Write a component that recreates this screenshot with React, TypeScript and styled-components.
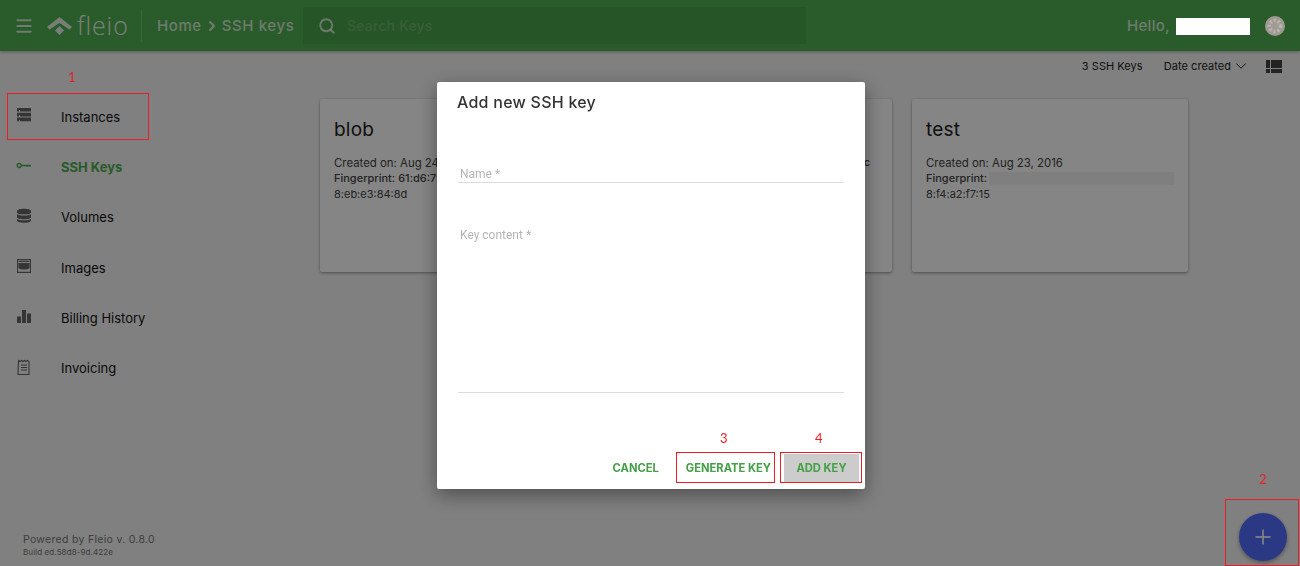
import { Menu, Search, ChevronRight, ChevronDown, Plus } from 'lucide-react'
import styled, { createGlobalStyle } from 'styled-components'

const GlobalStyle = createGlobalStyle`
  html, body {
    margin: 0;
    padding: 0;
    height: 100%;
    overflow: hidden;
    background: #f5f5f5;
    font-family: Inter, 'Liberation Sans', sans-serif;
  }
  * { box-sizing: border-box; }
`

const Page = styled.div`
  width: 1300px;
  height: 566px;
  display: flex;
  flex-direction: column;
  overflow: hidden;
`

const Header = styled.header`
  height: 51px;
  flex-shrink: 0;
  background: #51b153;
  box-shadow: 0 1px 3px rgba(0, 0, 0, 0.3);
  display: flex;
  align-items: center;
  padding-left: 14px;
  color: rgba(255, 255, 255, 0.75);
`

const LogoMark = styled.svg`
  width: 25px;
  height: 18px;
  margin-left: 13px;
  fill: rgba(255, 255, 255, 0.85);
`

const LogoText = styled.span`
  font-family: 'Open Sans', sans-serif;
  font-weight: 300;
  font-size: 25px;
  width: 59px;
  margin-left: 5px;
  margin-top: -2px;
  letter-spacing: 0.9px;
  color: rgba(255, 255, 255, 0.9);
`

const Divider = styled.div`
  width: 1px;
  height: 32px;
  background: rgba(255, 255, 255, 0.2);
  margin: 0 15px 0 5px;
`

const Crumbs = styled.div`
  display: flex;
  align-items: center;
  gap: 2px;
  font-size: 15px;
  font-weight: 500;
  letter-spacing: 0.6px;
  width: 146px;
  white-space: nowrap;
`

const SearchBox = styled.div`
  width: 503px;
  height: 37px;
  background: rgba(0, 0, 0, 0.08);
  display: flex;
  align-items: center;
  gap: 11px;
  padding-left: 15px;
`

const SearchHint = styled.span`
  font-size: 14px;
  font-weight: 500;
  letter-spacing: 0.2px;
  color: rgba(255, 255, 255, 0.2);
`

const Hello = styled.div`
  margin-left: auto;
  width: 146px;
  font-size: 15px;
  font-weight: 500;
  letter-spacing: 0.3px;
`

const Avatar = styled.svg`
  position: relative;
  z-index: 1;
  width: 20px;
  height: 20px;
  margin-right: 15px;
  margin-left: -8px;
`

const Body = styled.div`
  flex: 1;
  display: grid;
  grid-template-columns: 300px 1fr;
  min-height: 0;
`

const Sidebar = styled.aside`
  display: flex;
  flex-direction: column;
  padding-top: 40.6px;
`

const NavItem = styled.div<{ $active?: boolean }>`
  height: 50.3px;
  display: flex;
  align-items: center;
  padding-left: 16px;
  gap: 29px;
  font-size: 13px;
  font-weight: ${p => (p.$active ? 700 : 400)};
  color: ${p => (p.$active ? '#4caf50' : '#111')};

  svg {
    width: 16px;
    height: 16px;
    margin-bottom: 3px;
    flex-shrink: 0;
    color: ${p => (p.$active ? '#4caf50' : '#666')};
  }
`

const Footer = styled.footer`
  margin-top: auto;
  padding: 0 0 8px 23px;
  color: #777;
`

const Powered = styled.div`
  font-size: 10.5px;
  line-height: 14px;
  letter-spacing: 0.3px;
`

const Build = styled.div`
  font-size: 8px;
  line-height: 11px;
  letter-spacing: 0.1px;
`

const Main = styled.main`
  padding: 0 18px 0 20px;
`

const Toolbar = styled.div`
  height: 28px;
  display: flex;
  justify-content: flex-end;
  align-items: center;
  font-size: 11px;
  letter-spacing: 0.05px;
  color: #222;
  margin-top: 1px;
`

const Sort = styled.div`
  display: flex;
  align-items: center;
  gap: 1px;
  margin-left: 21px;
  margin-right: 16px;
`

const Cards = styled.div`
  display: flex;
  gap: 20px;
  margin-top: 19px;
`

const Card = styled.article`
  width: 276px;
  height: 173px;
  background: #fff;
  border-radius: 2px;
  box-shadow: 0 1px 3px rgba(0, 0, 0, 0.4);
  padding: 19px 14px;
  color: #444;
`

const CardTitle = styled.h3`
  margin: 0 0 13px;
  min-height: 24px;
  font-size: 19px;
  line-height: 23px;
  letter-spacing: 0.2px;
  font-weight: 400;
  color: #222;
`

const CardLine = styled.div`
  font-size: 11.4px;
  line-height: 16px;
  white-space: nowrap;
`

const CardKey = styled.div`
  font-size: 11px;
  line-height: 16px;
  white-space: nowrap;
`

const Fingerprint = styled.div<{ $end?: boolean }>`
  font-size: 11px;
  line-height: 15px;
  font-weight: 500;
  white-space: nowrap;
  display: flex;
  align-items: center;
  justify-content: ${p => (p.$end ? 'flex-end' : 'flex-start')};
  padding-right: ${p => (p.$end ? '8px' : '0')};
`

const Redacted = styled.span`
  display: block;
  width: 185px;
  height: 13px;
  margin-left: 2px;
  background: #f3f3f3;
`

const Overlay = styled.div`
  position: fixed;
  inset: 0;
  background: rgba(0, 0, 0, 0.48);
`

const Modal = styled.section`
  position: fixed;
  left: 437px;
  top: 82px;
  width: 428px;
  height: 407px;
  background: #fff;
  border-radius: 2px;
  box-shadow: 0 6px 20px rgba(0, 0, 0, 0.4);
  display: flex;
  flex-direction: column;
  padding: 10px 21px 7px;
`

const ModalTitle = styled.h2`
  margin: 0 0 53px -1px;
  font-size: 16px;
  line-height: 21px;
  font-weight: 500;
  letter-spacing: 0.25px;
  color: #333;
`

const Field = styled.div<{ $height: number; $pad?: number }>`
  height: ${p => p.$height}px;
  padding: ${p => p.$pad ?? 0}px 0 0 2px;
  border-bottom: 1px solid #ddd;
  font: 12px/16px Roboto, 'Liberation Sans', sans-serif;
  color: #b5b5b5;
`

const Actions = styled.div`
  margin-top: auto;
  display: flex;
  align-items: center;
  justify-content: flex-end;
  margin-right: -15px;
`

const ActionButton = styled.button<{ $filled?: boolean }>`
  border: 0;
  height: 28px;
  padding: 0;
  font: 700 11.2px Inter, 'Liberation Sans', sans-serif;
  color: #43a047;
  background: ${p => (p.$filled ? '#ccc' : 'transparent')};
  width: ${p => (p.$filled ? '75px' : 'auto')};
  margin-left: ${p => (p.$filled ? '13px' : '27px')};
`

const Fab = styled.button`
  position: fixed;
  left: 1239px;
  top: 513px;
  width: 48px;
  height: 48px;
  border: 0;
  border-radius: 50%;
  background: #2b3984;
  color: #8a8a8a;
  box-shadow: 0 2px 4px rgba(0, 0, 0, 0.35);
  display: flex;
  align-items: center;
  justify-content: center;
`

/* annotations drawn on top of the screenshot */
const Mark = styled.div<{ $x: number; $y: number; $w: number; $h: number }>`
  position: fixed;
  left: ${p => p.$x}px;
  top: ${p => p.$y}px;
  width: ${p => p.$w}px;
  height: ${p => p.$h}px;
  border: 1px solid #ed1c24;
`

const MarkLabel = styled.span<{ $x: number; $y: number }>`
  position: fixed;
  left: ${p => p.$x}px;
  top: ${p => p.$y}px;
  font: 13px Lato, 'Liberation Sans', sans-serif;
  color: #ed1c24;
`

const WhiteOut = styled.div`
  position: fixed;
  left: 1176px;
  top: 18px;
  width: 74px;
  height: 17px;
  background: #fff;
`

function ServerIcon() {
  return (
    <svg viewBox="0 0 16 16" fill="currentColor">
      <path d="M1 1h14v3.6H4V3H3v1.6H1zM1 5.800h14v3.6H4V8H3v1.4H1zM1 10.600h14v3.6H4V13H3v1.2H1z" />
    </svg>
  )
}

function KeyIcon() {
  return (
    <svg viewBox="0 0 16 16" fill="none" stroke="currentColor">
      <circle cx="3.2" cy="7.5" r="2" strokeWidth="1.4" />
      <path d="M5.2 7.500H15M11 7.500v1.6M13.600 7.500v1.2" strokeWidth="1.4" />
    </svg>
  )
}

function VolumesIcon() {
  return (
    <svg viewBox="0 0 16 16" fill="currentColor">
      <path d="M1 3c0-3 14-3 14 0v1.400c0 2.600-14 2.600-14 0z" />
      <path d="M1 6.200c2.500 1.800 11.500 1.800 14 0v3c0 2.600-14 2.600-14 0z" />
      <path d="M1 11c2.500 1.800 11.500 1.800 14 0v1.600c0 3-14 3-14 0z" />
    </svg>
  )
}

function ImagesIcon() {
  return (
    <svg viewBox="0 0 16 16" fill="currentColor">
      <path d="M1 1h14v14H1zM2 2.200v11.600h12V2.200z" />
      <path d="M2.500 3h11v1h-11zM2.500 5h11v5c-2 2-9 2-11 0z" />
    </svg>
  )
}

function BarsIcon() {
  return (
    <svg viewBox="0 0 16 16" fill="currentColor">
      <path d="M1 8.500h4V15H1zM6 2h4v13H6zM11 5.500h4V15h-4z" />
    </svg>
  )
}

function InvoiceIcon() {
  return (
    <svg viewBox="0 0 16 16" fill="none" stroke="currentColor" strokeWidth="1.1">
      <path d="M2.500 1.500l1.500 1 1.500-1 1.500 1 1.500-1 1.500 1 1.500-1 1.500 1v13h-11z" />
      <path d="M5 6h6M5 8.500h6M5 11h6" />
    </svg>
  )
}

function ListIcon() {
  return (
    <svg width="16" height="13" viewBox="0 0 16 13" fill="#444">
      <path d="M0 0h4v8H0zM5 0h11v8H5zM0 9h4v4H0zM5 9h11v4H5z" />
    </svg>
  )
}

const navItems = [
  { label: 'Instances', icon: <ServerIcon /> },
  { label: 'SSH Keys', icon: <KeyIcon />, active: true },
  { label: 'Volumes', icon: <VolumesIcon /> },
  { label: 'Images', icon: <ImagesIcon /> },
  { label: 'Billing History', icon: <BarsIcon /> },
  { label: 'Invoicing', icon: <InvoiceIcon /> },
]

export default function App() {
  return (
    <>
      <GlobalStyle />
      <Page>
        <Header>
          <Menu size={20} strokeWidth={2.4} />
          <LogoMark viewBox="0 0 25 18">
            <path d="M0 10L12.500 0 25 10l-2.500 2.500-10-6.500-10 6.500z" />
            <path d="M12.500 9l4.500 4.500L12.500 18 8 13.500z" />
          </LogoMark>
          <LogoText>fleio</LogoText>
          <Divider />
          <Crumbs>
            Home
            <ChevronRight size={16} strokeWidth={3} />
            SSH keys
          </Crumbs>
          <SearchBox>
            <Search size={18} strokeWidth={2.5} />
            <SearchHint>Search Keys</SearchHint>
          </SearchBox>
          <Hello>Hello,</Hello>
          <Avatar viewBox="0 0 20 20">
            <circle cx="10" cy="10" r="10" fill="#a09a95" />
            <circle cx="10" cy="10" r="5.500" fill="none" stroke="#bab5b0" strokeWidth="3.500" strokeDasharray="2 2" />
          </Avatar>
        </Header>
        <Body>
          <Sidebar>
            {navItems.map(item => (
              <NavItem key={item.label} $active={item.active}>
                {item.icon}
                {item.label}
              </NavItem>
            ))}
            <Footer>
              <Powered>Powered by Fleio v. 0.8.0</Powered>
              <Build>Build ed.58d8-9d.422e</Build>
            </Footer>
          </Sidebar>
          <Main>
            <Toolbar>
              3 SSH Keys
              <Sort>
                Date created
                <ChevronDown size={18} strokeWidth={1.3} />
              </Sort>
              <ListIcon />
            </Toolbar>
            <Cards>
              <Card>
                <CardTitle>blob</CardTitle>
                <CardLine>Created on: Aug 24, 2016</CardLine>
                <Fingerprint>Fingerprint: 61:d6:79</Fingerprint>
                <CardKey>8:eb:e3:84:8d</CardKey>
              </Card>
              <Card>
                <CardTitle />
                <CardLine />
                <Fingerprint $end>c</Fingerprint>
              </Card>
              <Card>
                <CardTitle>test</CardTitle>
                <CardLine>Created on: Aug 23, 2016</CardLine>
                <Fingerprint>
                  Fingerprint:
                  <Redacted />
                </Fingerprint>
                <CardKey>8:f4:a2:f7:15</CardKey>
              </Card>
            </Cards>
          </Main>
        </Body>
      </Page>
      <Overlay />
      <Modal>
        <ModalTitle>Add new SSH key</ModalTitle>
        <Field $height={17}>Name *</Field>
        <Field $height={210} $pad={44}>Key content *</Field>
        <Actions>
          <ActionButton>CANCEL</ActionButton>
          <ActionButton>GENERATE KEY</ActionButton>
          <ActionButton $filled>ADD KEY</ActionButton>
        </Actions>
      </Modal>
      <Fab>
        <Plus size={24} strokeWidth={1.5} />
      </Fab>
      <WhiteOut />
      <Mark $x={7} $y={93} $w={142} $h={47} />
      <Mark $x={1225} $y={499} $w={74} $h={67} />
      <Mark $x={676} $y={452} $w={99} $h={31} />
      <Mark $x={780} $y={452} $w={82} $h={31} />
      <MarkLabel $x={68} $y={69}>1</MarkLabel>
      <MarkLabel $x={1259} $y={471}>2</MarkLabel>
      <MarkLabel $x={720} $y={430}>3</MarkLabel>
      <MarkLabel $x={815} $y={430}>4</MarkLabel>
    </>
  )
}
